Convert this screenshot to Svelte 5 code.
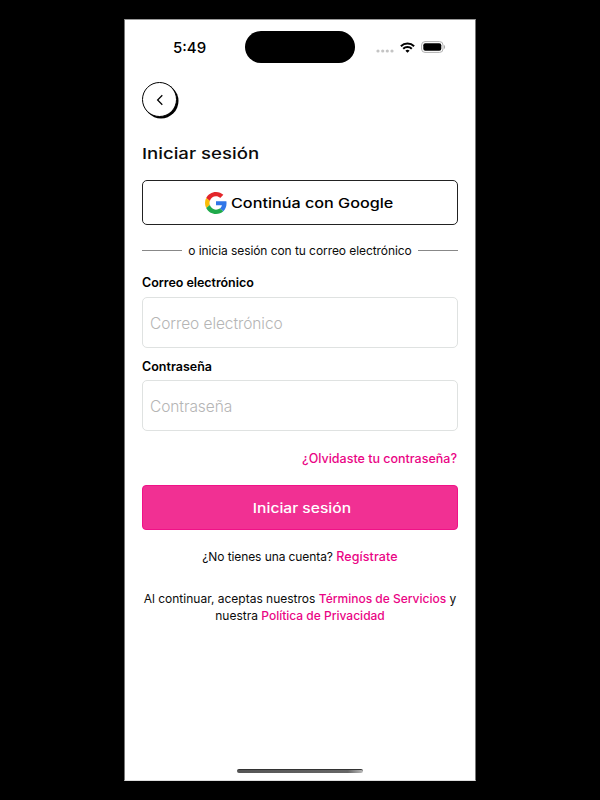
<script>
  let email = $state('');
  let password = $state('');
</script>

<main class="stage">
  <section class="phone">
    <header class="status">
      <span class="time">5:49</span>
      <span class="island"></span>
      <span class="indicators">
        <svg class="dots" width="18" height="4" viewBox="0 0 18 4" fill="#c4c4c4">
          <circle cx="2" cy="2" r="1.6" /><circle cx="6.7" cy="2" r="1.6" /><circle cx="11.3" cy="2" r="1.6" /><circle cx="16" cy="2" r="1.6" />
        </svg>
        <svg class="wifi" width="15" height="11" viewBox="0 0 15 11" fill="none" stroke="#000" stroke-width="2">
          <path d="M.9 4.2a9.4 9.4 0 0 1 13.2 0" />
          <path d="M3.2 6.8a6.1 6.1 0 0 1 8.6 0" />
          <path d="M7.5 10.7 5.4 8.7a3 3 0 0 1 4.2 0Z" fill="#000" stroke="none" />
        </svg>
        <svg class="battery" width="25" height="12" viewBox="0 0 25 12">
          <rect x=".6" y=".6" width="21.4" height="10.8" rx="3.4" fill="#fff" stroke="#b0b0b0" />
          <rect x="2.3" y="2.2" width="18" height="7.6" rx="2" />
          <path d="M23 4c1.5.5 1.5 3.500 0 4Z" fill="#aaa" />
        </svg>
      </span>
    </header>

    <div class="content">
      <button class="back" aria-label="Volver">
        <svg width="8" height="12" viewBox="0 0 8 12" fill="none" stroke="#000" stroke-width="1.25">
          <path d="M6.300 1.200 1.600 6l4.700 4.800" />
        </svg>
      </button>

      <h1><span class="wide title">Iniciar sesión</span></h1>

      <button class="google">
        <svg width="22" height="22" viewBox="0 0 48 48">
          <path fill="#E3262A" d="M24 9.500c3.540 0 6.710 1.220 9.210 3.600l6.850-6.850C35.900 2.380 30.470 0 24 0 14.620 0 6.510 5.380 2.560 13.220l7.980 6.190C12.430 13.720 17.740 9.500 24 9.500z" />
          <path fill="#3076E8" d="M46.980 24.550c0-1.570-.15-3.090-.38-4.550H24v9.020h12.940c-.58 2.960-2.260 5.480-4.780 7.180l7.730 6c4.510-4.180 7.090-10.360 7.090-17.650z" />
          <path fill="#FBBC05" d="M10.530 28.590c-.48-1.450-.76-2.990-.76-4.590s.27-3.140.76-4.590l-7.980-6.190C.92 16.460 0 20.120 0 24c0 3.880.92 7.540 2.560 10.780l7.970-6.190z" />
          <path fill="#1FAA4B" d="M24 48c6.480 0 11.930-2.130 15.890-5.810l-7.730-6c-2.150 1.450-4.920 2.300-8.160 2.300-6.260 0-11.570-4.220-13.470-9.910l-7.980 6.190C6.510 42.620 14.620 48 24 48z" />
        </svg>
        <span class="wide glabel">Continúa con Google</span>
      </button>

      <div class="divider"><span>o inicia sesión con tu correo electrónico</span></div>

      <label for="email" class="l1">Correo electrónico</label>
      <input id="email" type="email" placeholder="Correo electrónico" bind:value={email} />

      <label for="password" class="l2">Contraseña</label>
      <input id="password" type="password" placeholder="Contraseña" bind:value={password} />

      <a class="forgot" href="#recuperar">¿Olvidaste tu contraseña?</a>

      <button class="submit"><span class="wide slabel">Iniciar sesión</span></button>

      <p class="signup"><span>¿No tienes una cuenta?</span> <a href="#registro">Regístrate</a></p>

      <p class="terms">
        <span class="t1">Al continuar, aceptas nuestros <a href="#terminos">Términos de Servicios</a> y</span><br />
        <span class="t2">nuestra <a href="#privacidad">Política de Privacidad</a></span>
      </p>
    </div>

    <div class="home"></div>
  </section>
</main>

<style>
  :global(body) { background: #000; }
  * { box-sizing: border-box; }
  .stage {
    height: 800px;
    padding-top: 19px;
    background: #000;
    font-family: Inter, "Liberation Sans", sans-serif;
    color: #0b0b0b;
    overflow: hidden;
  }
  .phone {
    width: 352px;
    height: 762px;
    margin-left: 124px;
    background: #fff;
    border: 1px solid #777;
    border-top-color: #999;
    border-bottom-color: #ddd;
    display: flex;
    flex-direction: column;
  }
  .status {
    height: 62px;
    padding: 11px 30px 0 48px;
    display: grid;
    grid-template-columns: 72px 110px 1fr;
    align-items: start;
  }
  .time { font-size: 15px; line-height: 33px; font-weight: 500; color: #000; }
  .island { height: 32px; border-radius: 16px; background: #000; }
  .indicators { height: 32px; display: flex; align-items: center; padding-left: 20.5px; }
  .indicators svg { flex: none; }
  .dots { margin-top: 7px; }
  .wifi { margin-left: 6px; }
  .battery { margin-left: 6px; }

  .content {
    flex: 1;
    padding: 0 17px;
    display: flex;
    flex-direction: column;
  }
  button { font: inherit; padding: 0; }
  .back {
    width: 35px;
    height: 35px;
    border: 1px solid #000;
    border-radius: 50%;
    background: #fff;
    box-shadow: 1.5px 1.5px 0 #000;
    display: flex;
    align-items: center;
    justify-content: center;
  }
  h1 { margin: 24px 0 0; padding-top: 1px; height: 24px; line-height: 24px; font-size: 15px; }
  .wide { display: inline-block; white-space: nowrap; font-weight: 550; }
  .title { transform: scaleX(1.24); transform-origin: left; }
  .google {
    margin-top: 15px;
    height: 45px;
    flex: none;
    border: 1px solid #222;
    border-radius: 5px;
    background: #fff;
    color: #000;
    display: flex;
    align-items: center;
    padding-left: 62px;
    gap: 4px;
    font-size: 13px;
  }
  .glabel { transform: scaleX(1.245); transform-origin: left; }
  .divider {
    margin-top: 17px;
    height: 16px;
    display: flex;
    align-items: center;
    justify-content: space-between;
    font-size: 12px;
    line-height: 16px;
    letter-spacing: -0.07px;
    white-space: nowrap;
  }
  .divider::before, .divider::after { content: ""; width: 40px; height: 1px; background: #888; }
  .divider span { padding-top: 1px; }
  label { font-size: 12.5px; font-weight: 600; line-height: 16px; height: 16px; color: #000; letter-spacing: -0.05px; }
  .l1 { margin-top: 17px; }
  .l2 { margin-top: 10px; padding-top: 0.5px; letter-spacing: 0; }
  input {
    margin: 6px 0 0;
    height: 51px;
    flex: none;
    width: 100%;
    border: 1px solid #dfe2e1;
    border-radius: 5px;
    padding: 2px 7px 0;
    outline: none;
    background: #fff;
    font: 300 15.5px Inter, sans-serif;
    letter-spacing: -0.08px;
  }
  input::placeholder { color: #b5b5b5; opacity: 1; }
  a { color: #ea0485; text-decoration: none; }
  .forgot { margin: 19px 1px 0 0; height: 18px; line-height: 18px; align-self: flex-end; font-size: 12.5px; font-weight: 500; white-space: nowrap; }
  .submit {
    margin-top: 17px;
    height: 45px;
    flex: none;
    border: 1px solid #f01288;
    border-radius: 4px;
    background: #f13093;
    color: #fff;
    font-size: 13px;
    padding-left: 3px;
  }
  .slabel { transform: scaleX(1.2); }
  p { margin: 0; text-align: center; font-size: 12px; line-height: 17px; white-space: nowrap; }
  .signup { margin-top: 18px; }
  .signup span { letter-spacing: -0.09px; }
  .signup a { font-size: 12.5px; font-weight: 450; letter-spacing: 0.1px; }
  .terms { margin-top: 25px; }
  .terms a { font-weight: 450; }
  .home {
    width: 126px;
    height: 4px;
    margin: 0 auto 7px;
    border-radius: 2px;
    background: linear-gradient(90deg, #555 0, #666 88%, #bbb 100%);
    border-top: 1px solid #333;
  }
</style>
